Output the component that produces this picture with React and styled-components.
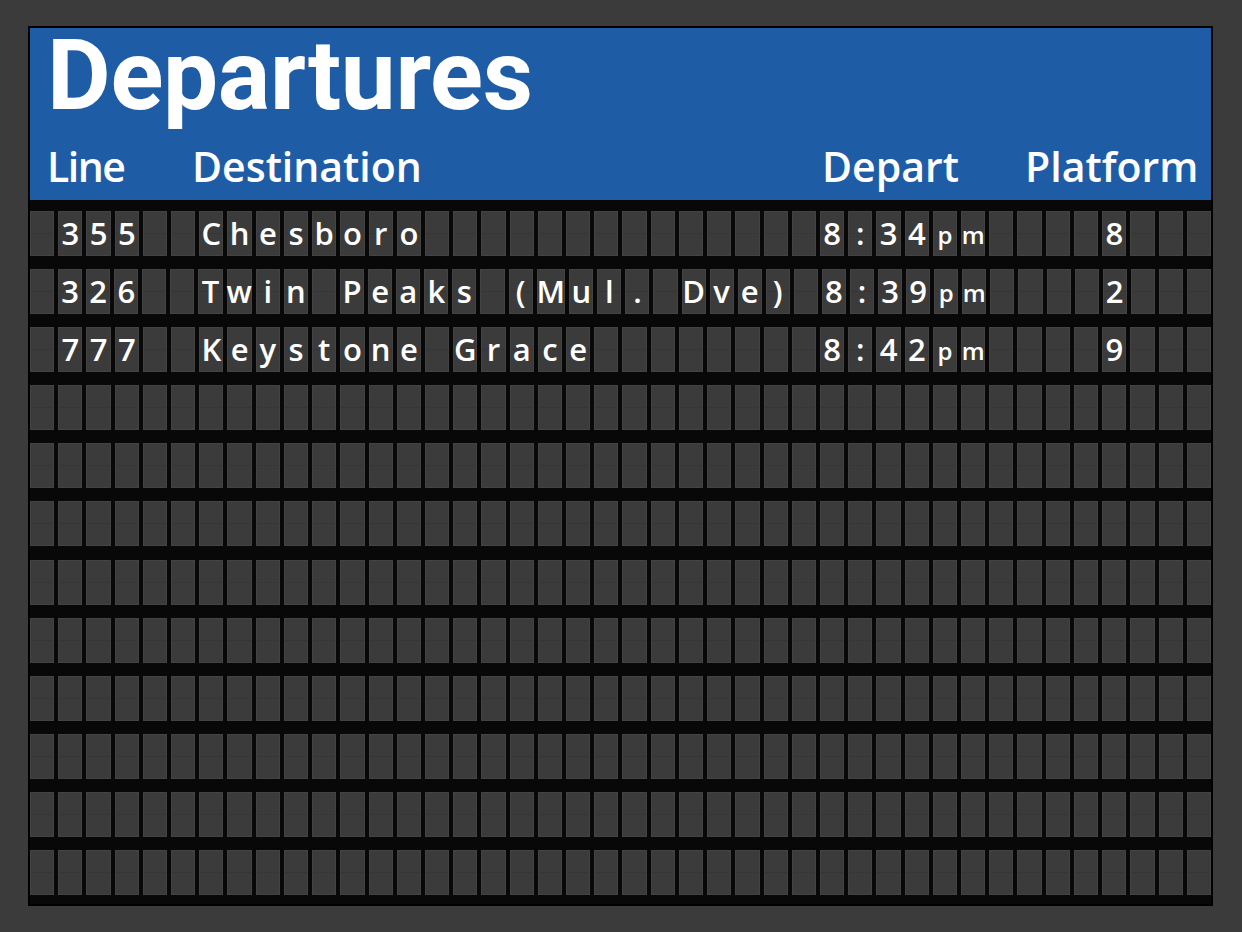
import React from 'react'
import styled, { createGlobalStyle } from 'styled-components'

const GlobalStyle = createGlobalStyle`
  html, body {
    margin: 0;
    padding: 0;
    background: #3b3b3b;
  }
`

const COLS = 42
const ROWS = 12

const departures = [
  { line: '355', dest: 'Chesboro', time: '8:34', platform: '8' },
  { line: '326', dest: 'Twin Peaks (Mul. Dve)', time: '8:39', platform: '2' },
  { line: '777', dest: 'Keystone Grace', time: '8:42', platform: '9' },
]

const Page = styled.div`
  width: 1242px;
  height: 932px;
  padding: 26px 0 0 28px;
  box-sizing: border-box;
  background: #3b3b3b;
`

const Board = styled.div`
  width: 1181px;
  border: 2px solid #000;
  background: #080808;
  display: flex;
  flex-direction: column;
`

const Header = styled.div`
  height: 172px;
  box-sizing: border-box;
  background: #1f5ca6;
  color: #fff;
  display: flex;
  flex-direction: column;
  padding: 0 0 0 17px;
`

const Title = styled.h1`
  margin: 0;
  font-family: Roboto, "Liberation Sans", sans-serif;
  font-weight: 700;
  font-size: 98px;
  line-height: 96px;
  letter-spacing: -0.3px;
`

const Labels = styled.div`
  display: flex;
  margin-top: 21px;
  font-family: "Open Sans", "Noto Sans", sans-serif;
  font-weight: 600;
  font-size: 41px;
  line-height: 42px;
`

const Label = styled.div`
  width: ${p => p.w}px;
  flex: none;
  white-space: nowrap;
  letter-spacing: ${p => p.tight ? -1.5 : 0}px;
`

const Grid = styled.div`
  display: flex;
  flex-direction: column;
  gap: 13.1px;
  padding: 11px 0 9px;
`

const Row = styled.div`
  display: grid;
  grid-template-columns: repeat(${COLS}, 1fr);
  column-gap: 4px;
  height: 45px;
`

const Cell = styled.div`
  background: linear-gradient(#3b3b3b 0 49%, #363636 49% 51%, #3b3b3b 51% 100%);
  box-shadow: inset 0 0 0 1px #434343;
  color: #fff;
  display: flex;
  align-items: center;
  justify-content: center;
  font-family: "Open Sans", "Noto Sans", sans-serif;
  font-weight: 600;
  font-size: ${p => (p.small ? 24 : 31)}px;
  line-height: 1;
  padding-top: ${p => (p.small ? 3 : 0)}px;
  box-sizing: border-box;
`

function buildRow(d) {
  const chars = Array(COLS).fill(null).map(() => ({ ch: '', small: false }))
  if (!d) return chars
  const put = (start, text, small = false) => {
    text.split('').forEach((c, i) => {
      chars[start + i] = { ch: c === ' ' ? '' : c, small }
    })
  }
  put(1, d.line)
  put(6, d.dest)
  put(28, d.time)
  put(32, 'pm', true)
  put(38, d.platform)
  return chars
}

const App = () => {
  const rows = Array.from({ length: ROWS }, (_, i) => buildRow(departures[i]))
  return (
    <Page>
      <GlobalStyle />
      <Board>
        <Header>
          <Title>Departures</Title>
          <Labels>
            <Label w={145} tight>Line</Label>
            <Label w={630}>Destination</Label>
            <Label w={203}>Depart</Label>
            <Label>Platform</Label>
          </Labels>
        </Header>
        <Grid>
          {rows.map((cells, r) => (
            <Row key={r}>
              {cells.map((c, i) => (
                <Cell key={i} small={c.small}>{c.ch}</Cell>
              ))}
            </Row>
          ))}
        </Grid>
      </Board>
    </Page>
  )
}

export default App
